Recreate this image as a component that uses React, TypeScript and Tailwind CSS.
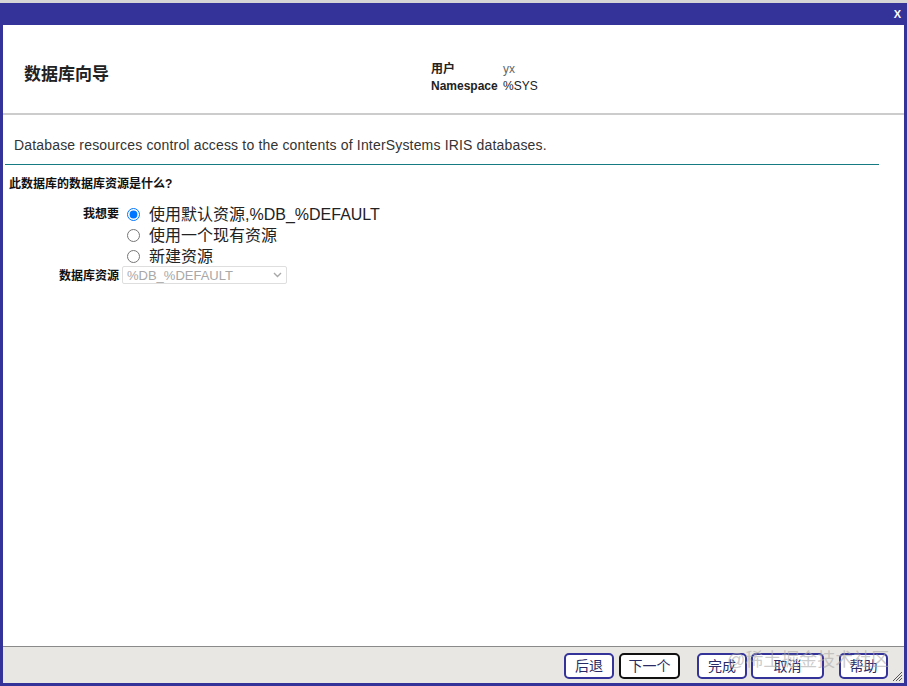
import type { ReactNode } from "react";

const font = "font-['Liberation_Sans','Noto_Sans_CJK_SC',sans-serif]";

function WizardButton({
  children,
  width,
  focused = false,
  className = "",
}: {
  children: ReactNode;
  width: string;
  focused?: boolean;
  className?: string;
}) {
  return (
    <button
      type="button"
      className={`flex h-[26px] items-center justify-center rounded-[5px] border-2 bg-white text-[14px] leading-none text-[#2a2a66] ${
        focused ? "border-[#111111]" : "border-[#333399]"
      } ${width} ${className}`}
    >
      {children}
    </button>
  );
}

function Radio({ label, checked = false }: { label: string; checked?: boolean }) {
  return (
    <label className="flex h-[21px] items-center text-[16px] text-[#222]">
      <input
        type="radio"
        name="resource"
        defaultChecked={checked}
        className="m-0 ml-[5px] h-[13px] w-[13px]"
      />
      <span className="ml-[9px] leading-none">{label}</span>
    </label>
  );
}

export default function App() {
  return (
    <div className={`relative flex h-[686px] w-[908px] flex-col overflow-hidden bg-[#d6d6d6] pt-[3px] pr-[1px] ${font}`}>
      <div className="flex flex-1 flex-col border-x-[3px] border-b-[3px] border-[#333399] bg-white">
        {/* title bar */}
        <div className="flex h-[22px] items-center justify-end bg-[#333399] pr-[3px]">
          <span className="text-[11px] font-bold leading-none text-white">X</span>
        </div>

        {/* header */}
        <div className="flex h-[90px] items-start border-b-2 border-[#cccccc]">
          <div className="w-[428px] pl-[21px] pt-[38px] text-[17px] font-bold leading-[24px] text-[#222]">
            数据库向导
          </div>
          <div className="grid grid-cols-[72px_auto] pt-[36px] text-[12px] leading-[17px] text-[#222]">
            <span className="font-bold">用户</span>
            <span className="text-[#666]">yx</span>
            <span className="font-bold">Namespace</span>
            <span>%SYS</span>
          </div>
        </div>

        {/* body */}
        <div className="flex-1">
          <p className="pl-[11px] pt-[22px] text-[14px] leading-[16px] tracking-[0.17px] text-[#333]">
            Database resources control access to the contents of InterSystems IRIS databases.
          </p>
          <div className="ml-[2px] mt-[11px] h-px w-[874px] bg-[#167b82]" />

          <p className="ml-[6px] mt-[12px] text-[12px] font-bold leading-[14px] text-[#111]">
            此数据库的数据库资源是什么?
          </p>

          <div className="mt-[13px] grid grid-cols-[116px_auto] gap-x-[3px] text-[12px]">
            <span className="pt-[3px] text-right font-bold leading-[14px] text-[#111]">我想要</span>
            <div className="flex flex-col">
              <Radio label="使用默认资源,%DB_%DEFAULT" checked />
              <Radio label="使用一个现有资源" />
              <Radio label="新建资源" />
            </div>

            <span className="flex h-[18px] items-center justify-end font-bold text-[#111]">数据库资源</span>
            <div className="relative -mt-px h-[18px] w-[165px]">
              <select
                disabled
                className="h-full w-full appearance-none rounded-[2px] border border-[#dedede] bg-white py-0 pl-[4px] text-[13px] leading-[15px] text-[#a8a8a8]"
              >
                <option>%DB_%DEFAULT</option>
              </select>
              <svg
                className="pointer-events-none absolute right-[5px] top-[6px]"
                width="9"
                height="6"
                viewBox="0 0 9 6"
                fill="none"
                stroke="#a8a8a8"
                strokeWidth="1.4"
              >
                <path d="M1 1l3.5 3.5L8 1" />
              </svg>
            </div>
          </div>
        </div>

        {/* footer */}
        <div className="relative flex h-[37px] items-start border-t border-[#8a8a8a] bg-[#e9e7e3] pl-[561px] pt-[6px]">
          <WizardButton width="w-[50px]">后退</WizardButton>
          <WizardButton width="w-[61px]" focused className="ml-[5px]">
            下一个
          </WizardButton>
          <WizardButton width="w-[50px]" className="ml-[17px]">
            完成
          </WizardButton>
          <WizardButton width="w-[73px]" className="ml-[4px]">
            取消
          </WizardButton>
          <WizardButton width="w-[49px]" className="ml-[15px]">
            帮助
          </WizardButton>

          <svg
            className="absolute bottom-[1px] right-[1px]"
            width="12"
            height="12"
            viewBox="0 0 12 12"
            stroke="#555"
            strokeWidth="1"
          >
            <path d="M11 2L2 11M11 5L5 11M11 8L8 11" />
          </svg>

          <span className="pointer-events-none absolute left-[724px] top-[2px] text-[18px] leading-[22px] text-[#a9a9a9]/60">
            @稀土掘金技术社区
          </span>
        </div>
      </div>
    </div>
  );
}
